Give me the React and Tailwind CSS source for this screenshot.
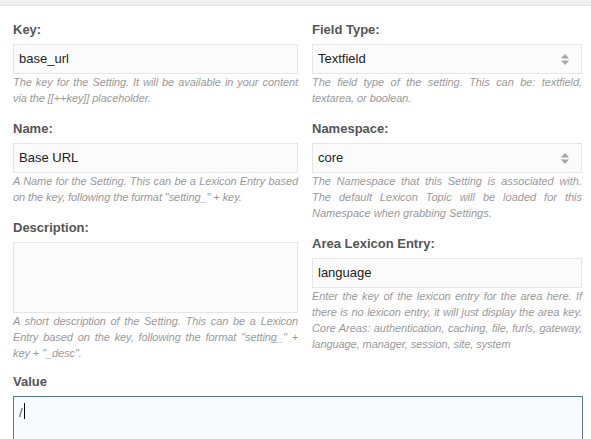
import React from "react";

const font = { fontFamily: '"Liberation Sans", Arial, sans-serif' };

function Label({ children }) {
  return (
    <div className="text-[13px] font-bold leading-4 text-[#555555] mb-[6px]">{children}</div>
  );
}

function Help({ children, loose }) {
  return (
    <div
      className={
        loose
          ? "text-[11px] italic leading-4 tracking-normal text-[#9a9a9a] text-justify"
          : "text-[11px] italic leading-4 tracking-[-0.08px] text-[#9a9a9a] text-justify"
      }
    >
      {children}
    </div>
  );
}

function Input({ value }) {
  return (
    <div className="h-[30px] border border-[#e6e6e6] bg-[#fbfbfb] flex items-center px-[5px] text-[13px] text-[#222222]">
      {value}
    </div>
  );
}

function Select({ value }) {
  return (
    <div className="h-[30px] border border-[#e6e6e6] bg-[#fbfbfb] flex items-center justify-between pl-[5px] pr-[12px] text-[13px] text-[#222222]">
      <span>{value}</span>
      <svg width="8" height="11" viewBox="0 0 8 11">
        <path d="M4 0 L8 4.5 L0 4.5 Z" fill="#a5a5a5" />
        <path d="M4 11 L8 6.5 L0 6.5 Z" fill="#a5a5a5" />
      </svg>
    </div>
  );
}

export default function App() {
  return (
    <div className="w-[591px] h-[439px] overflow-hidden bg-white" style={font}>
      <div className="h-[6px] bg-[#f2f2f2] border-b border-[#e2e2e2]" />
      <div className="pl-[13px] pr-[9px] pt-[16px]">
        <div className="flex gap-[14px]">
          <div className="w-[285px] flex flex-col gap-[15px]">
            <div>
              <Label>Key:</Label>
              <Input value="base_url" />
              <Help>
                The key for the Setting. It will be available in your content via the [[++key]] placeholder.
              </Help>
            </div>
            <div>
              <Label>Name:</Label>
              <Input value="Base URL" />
              <Help>
                A Name for the Setting. This can be a Lexicon Entry based on the key, following the format "setting_" + key.
              </Help>
            </div>
            <div>
              <Label>Description:</Label>
              <div className="h-[71px] border border-[#e6e6e6] bg-[#fbfbfb]" />
              <Help>
                A short description of the Setting. This can be a Lexicon Entry based on the key, following the format "setting_" + key + "_desc".
              </Help>
            </div>
          </div>
          <div className="w-[270px] flex flex-col gap-[15px]">
            <div>
              <Label>Field Type:</Label>
              <Select value="Textfield" />
              <Help>
                The field type of the setting. This can be: textfield, textarea, or boolean.
              </Help>
            </div>
            <div>
              <Label>Namespace:</Label>
              <Select value="core" />
              <Help loose>
                The Namespace that this Setting is associated with. The default Lexicon Topic will be loaded for this Namespace when grabbing Settings.
              </Help>
            </div>
            <div>
              <Label>Area Lexicon Entry:</Label>
              <Input value="language" />
              <Help>
                Enter the key of the lexicon entry for the area here. If there is no lexicon entry, it will just display the area key. Core Areas: authentication, caching, file, furls, gateway, language, manager, session, site, system
              </Help>
            </div>
          </div>
        </div>
        <div className="mt-[13px]">
          <Label>Value</Label>
          <div className="w-[570px] h-[60px] border border-[#587d8a] bg-[#f7fbfd] px-[5px] pt-[6px] text-[13px] text-[#555555] flex items-start">
            <span>/</span>
            <span className="inline-block w-px h-[16px] bg-black ml-[1px]" />
          </div>
        </div>
      </div>
    </div>
  );
}
